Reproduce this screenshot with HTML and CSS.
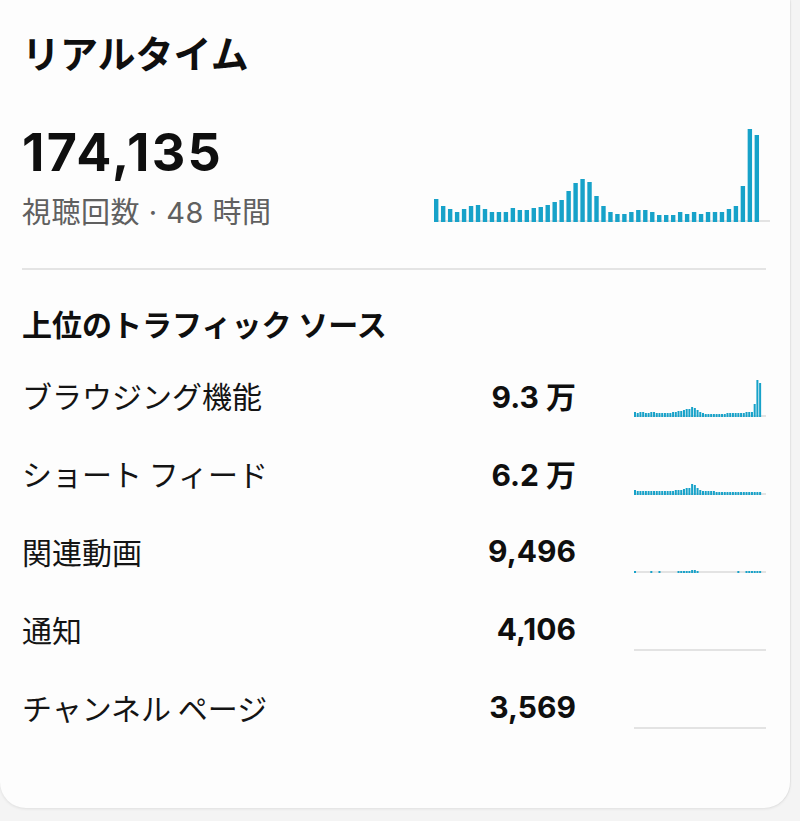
FILE: index.html
```html
<!DOCTYPE html>
<html lang="ja">
<head>
<meta charset="utf-8">
<title>リアルタイム</title>
<link rel="stylesheet" href="styles.css">
</head>
<body>
<div class="card">
  <h1 class="title">リアルタイム</h1>
  <div class="summary">
    <div class="stats">
      <div class="big">174,135</div>
      <div class="sub">視聴回数 · 48 時間</div>
    </div>
    <svg class="chart" width="336" height="96" data-pitch="6.97" data-bar="4.4" data-series="22,15,12,9,12,15,16,12,9,9,9,13,11,11,13,14,16,19,21,30,38,42,39,25,15,9,7,7,9,11,11,9,6,6,6,9,7,9,7,9,9,9,12,15,35,92,86,0"></svg>
  </div>
  <div class="divider"></div>
  <h2 class="heading">上位のトラフィック ソース</h2>
  <ul class="sources">
    <li class="source">
      <span class="label">ブラウジング機能</span>
      <span class="value">9.3 万</span>
      <svg class="spark" width="132" height="40" data-pitch="2.72" data-bar="2" data-series="4,3,4,4,3,3,4,4,3,3,3,3,3,3,4,4,5,5,6,7,7,9,8,6,4,3,2,2,2,2,2,2,2,2,3,3,3,3,3,3,3,4,4,4,12,36,33,0"></svg>
    </li>
    <li class="source">
      <span class="label">ショート フィード</span>
      <span class="value">6.2 万</span>
      <svg class="spark" width="132" height="40" data-pitch="2.72" data-bar="2" data-series="4,3,3,3,3,3,3,3,3,3,3,3,3,3,3,4,4,4,5,6,6,10,9,6,4,3,3,3,3,3,2,2,2,2,2,2,2,2,2,2,2,2,2,2,2,2,2,0"></svg>
    </li>
    <li class="source">
      <span class="label">関連動画</span>
      <span class="value">9,496</span>
      <svg class="spark" width="132" height="40" data-pitch="2.72" data-bar="2" data-series="1,0,0,0,0,0,1,0,0,1,0,0,0,0,0,0,1,1,1,1,1,2,2,1,0,0,0,0,0,0,0,0,0,0,0,0,0,0,1,0,0,1,1,1,1,1,1,0"></svg>
    </li>
    <li class="source">
      <span class="label">通知</span>
      <span class="value">4,106</span>
      <svg class="spark" width="132" height="40" data-pitch="2.72" data-bar="2" data-series="0,0,0,0,0,0,0,0,0,0,0,0,0,0,0,0,0,0,0,0,0,0,0,0,0,0,0,0,0,0,0,0,0,0,0,0,0,0,0,0,0,0,0,0,0,0,0,0"></svg>
    </li>
    <li class="source">
      <span class="label">チャンネル ページ</span>
      <span class="value">3,569</span>
      <svg class="spark" width="132" height="40" data-pitch="2.72" data-bar="2" data-series="0,0,0,0,0,0,0,0,0,0,0,0,0,0,0,0,0,0,0,0,0,0,0,0,0,0,0,0,0,0,0,0,0,0,0,0,0,0,0,0,0,0,0,0,0,0,0,0"></svg>
    </li>
  </ul>
</div>
<script src="script.js"></script>
</body>
</html>
```

FILE: styles.css
```css
html, body {
  margin: 0;
  padding: 0;
}
body {
  background: #f4f4f4;
  font-family: Inter, "Noto Sans CJK JP", sans-serif;
  color: #0f0f0f;
  height: 821px;
  overflow: hidden;
}
.card {
  width: 790px;
  box-sizing: border-box;
  background: #fdfdfd;
  border-radius: 0 0 26px 26px;
  box-shadow: 0 1px 3px rgba(0, 0, 0, 0.09), 1px 0 0 #ececec;
  padding: 30px 24px 62px 22px;
}
.title {
  margin: 0;
  font-size: 38px;
  line-height: 44px;
  font-weight: 700;
  font-family: "Noto Sans CJK JP", sans-serif;
}
.summary {
  display: flex;
  justify-content: space-between;
  align-items: flex-end;
  margin-top: 48px;
}
.big {
  font-size: 52px;
  line-height: 62px;
  font-weight: 700;
  letter-spacing: 2.3px;
}
.sub {
  font-size: 29px;
  line-height: 38px;
  color: #606060;
  margin-top: 10px;
  letter-spacing: 0.5px;
}
.chart {
  display: block;
  margin-right: -4px;
  margin-bottom: 10px;
}
.divider {
  height: 2px;
  background: #e4e4e4;
  margin-top: 36px;
}
.heading {
  margin: 33px 0 13px;
  font-size: 30px;
  line-height: 40px;
  font-weight: 700;
  font-family: "Noto Sans CJK JP", sans-serif;
}
.sources {
  list-style: none;
  margin: 0;
  padding: 0;
}
.source {
  display: grid;
  grid-template-columns: 1fr auto 132px;
  column-gap: 58px;
  align-items: center;
  height: 78px;
}
.label {
  font-size: 30px;
  font-family: "Noto Sans CJK JP", sans-serif;
  color: #141414;
}
.value {
  font-size: 30px;
  font-weight: 700;
  text-align: right;
}
.spark {
  display: block;
  margin-top: 4px;
}
.bar {
  fill: #17a2c9;
}
.base {
  fill: #e3e3e3;
}
```

FILE: script.js
```js
(function () {
  var NS = 'http://www.w3.org/2000/svg';
  var svgs = document.querySelectorAll('svg[data-series]');
  svgs.forEach(function (svg) {
    var w = +svg.getAttribute('width');
    var h = +svg.getAttribute('height');
    var pitch = +svg.dataset.pitch;
    var bw = +svg.dataset.bar;
    var vals = svg.dataset.series.split(',').map(Number);
    var base = document.createElementNS(NS, 'rect');
    base.setAttribute('class', 'base');
    base.setAttribute('x', 0);
    base.setAttribute('y', h - 2);
    base.setAttribute('width', w);
    base.setAttribute('height', 2);
    svg.appendChild(base);
    vals.forEach(function (v, i) {
      if (!v) return;
      var r = document.createElementNS(NS, 'rect');
      r.setAttribute('class', 'bar');
      r.setAttribute('x', (i * pitch).toFixed(2));
      r.setAttribute('y', h - 1 - v);
      r.setAttribute('width', bw);
      r.setAttribute('height', v + 1);
      svg.appendChild(r);
    });
  });
})();
```
